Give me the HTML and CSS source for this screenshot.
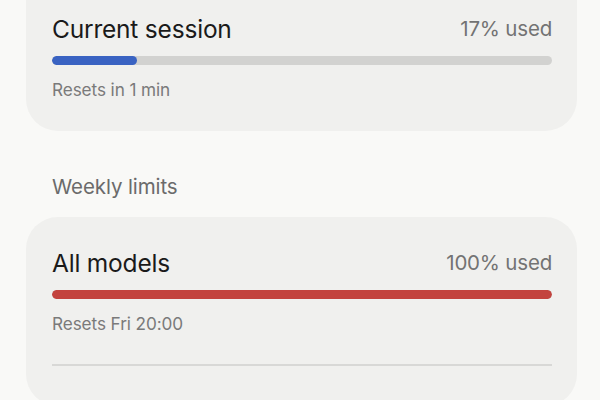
FILE: index.html
```html
<!DOCTYPE html>
<html lang="en">

<head>
    <meta charset="UTF-8">
    <meta name="viewport" content="width=device-width, initial-scale=1.0">
    <title>Usage</title>
    <link rel="stylesheet" href="styles.css">
</head>

<body>
    <div class="page">
        <!-- Current session -->
        <div class="card card-first">
            <div class="row">
                <span class="name">Current session</span>
                <span class="used">17% used</span>
            </div>
            <div class="track">
                <div class="fill fill-blue" style="width: 17%"></div>
            </div>
            <div class="resets">Resets in 1 min</div>
        </div>

        <div class="section-title">Weekly limits</div>

        <!-- Weekly -->
        <div class="card">
            <div class="row">
                <span class="name">All models</span>
                <span class="used">100% used</span>
            </div>
            <div class="track">
                <div class="fill fill-red" style="width: 100%"></div>
            </div>
            <div class="resets">Resets Fri 20:00</div>
            <div class="divider"></div>
        </div>
    </div>
</body>

</html>
```

FILE: styles.css
```css
body {
    margin: 0;
    background-color: #f9f9f7;
    font-family: Inter, "Noto Sans", sans-serif;
    overflow: hidden;
}

.page {
    padding: 0 23px 0 26px;
}

.card {
    background-color: #f0f0ee;
    border-radius: 32px;
    padding: 32px 25px 40px 26px;
}

.card-first {
    margin-top: -40px;
    padding-top: 55px;
    padding-bottom: 31px;
}

.row {
    display: flex;
    justify-content: space-between;
    align-items: center;
    height: 28px;
    line-height: 28px;
}

.name {
    font-size: 24.5px;
    color: #1a1a1a;
    letter-spacing: -0.2px;
}

.used {
    font-size: 20.5px;
    color: #737373;
    letter-spacing: -0.2px;
}

.track {
    margin-top: 13px;
    height: 9px;
    border-radius: 5px;
    background-color: #d2d2d0;
    overflow: hidden;
}

.fill {
    height: 100%;
    border-radius: 5px;
}

.fill-blue {
    background-color: #3a63c2;
}

.fill-red {
    background-color: #c3433e;
}

.resets {
    margin-top: 15px;
    font-size: 17.2px;
    line-height: 20px;
    color: #7a7a7a;
    letter-spacing: -0.1px;
}

.section-title {
    margin: 44px 0 18px 26px;
    font-size: 20.5px;
    line-height: 24px;
    color: #6b6b6b;
    letter-spacing: -0.1px;
}

.divider {
    margin-top: 30px;
    height: 2px;
    background-color: #d8d8d6;
}
```
